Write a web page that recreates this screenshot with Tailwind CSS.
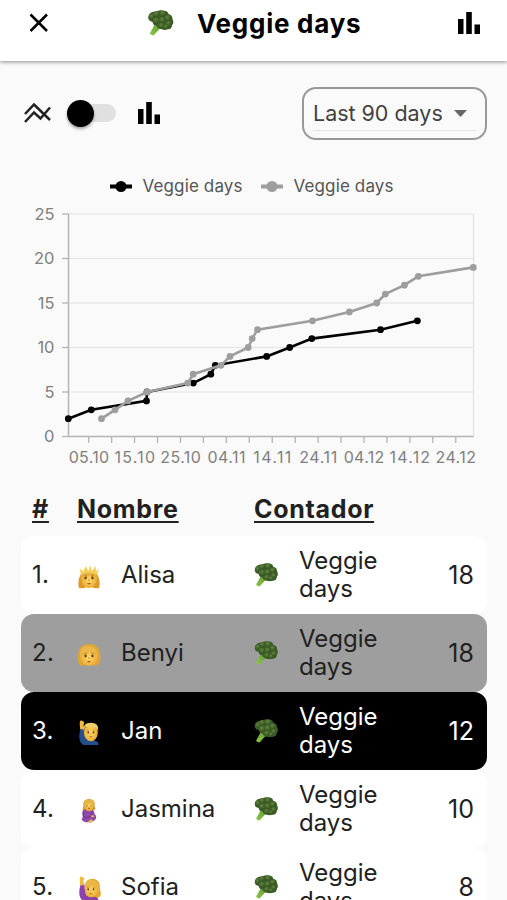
<!DOCTYPE html>
<html lang="es">
<head>
<meta charset="utf-8">
<meta name="viewport" content="width=device-width, initial-scale=1">
<title>Veggie days</title>
<script src="https://cdn.jsdelivr.net/npm/@tailwindcss/browser@4"></script>
</head>
<body class="h-[900px] overflow-hidden bg-[#fafafa] font-[Inter,sans-serif] text-[#212121]">
<svg class="absolute size-0">
  <defs>
    <linearGradient id="stem" x1="0" y1="1" x2="1" y2="0"><stop offset="0" stop-color="#8fc54b"/><stop offset="1" stop-color="#4f8d27"/></linearGradient>
    <radialGradient id="face"><stop offset="0" stop-color="#ffdc6b"/><stop offset="1" stop-color="#eaad35"/></radialGradient>
    <radialGradient id="bud" cx=".4" cy=".3"><stop offset="0" stop-color="#64843f"/><stop offset="1" stop-color="#385923"/></radialGradient>
    <symbol id="bars" viewBox="0 0 22 22"><path d="M0 7h5.500v15H0zM8.200 0h5.600v22H8.200zM16.500 12.500H22V22h-5.500z"/></symbol>
    <symbol id="broccoli" viewBox="0 0 26 26">
      <path d="M8 13L2.500 23q-.3 1.500 1 1.600l1.500.6q1 .5 1.800-.5L12 19l6-3-4-6z" fill="url(#stem)"/>
      <path d="M1 6Q3 1 8 2q4-3 9-1 3-.5 4 3 4 1 4 5 2 4-.5 6 0 5-5 4-3 2-6-.5-4 0-4.500-3Q6 16 5 12 0 11 1 6z" fill="#3d5e29"/>
      <g fill="url(#bud)"><circle cx="4.500" cy="7" r="3.300"/><circle cx="9" cy="4.500" r="3.400"/><circle cx="15.500" cy="4" r="3.600"/><circle cx="20.500" cy="8.500" r="3.600"/><circle cx="9" cy="11" r="3.600"/><circle cx="15" cy="10.500" r="3.600"/><circle cx="14" cy="16" r="3.200"/><circle cx="21.500" cy="14" r="3.200"/><circle cx="18.500" cy="17" r="2.600"/></g>
    </symbol>
    <symbol id="features" viewBox="0 0 24 24">
      <g fill="#5b3c14"><ellipse cx="8.600" cy="13" rx="1.100" ry="1.400"/><ellipse cx="15.400" cy="13" rx="1.100" ry="1.400"/></g>
      <path d="M7 10.500q1.500-.8 2.800 0M14.200 10.500q1.500-.8 2.800 0M12 14v2" fill="none" stroke="#b77a20" stroke-width=".8"/>
      <path d="M9.800 18.300q2.200-.6 4.400 0-2.200 2.300-4.400 0z" fill="#b45324"/>
    </symbol>
    <symbol id="princess" viewBox="0 0 24 24">
      <path d="M2 23Q0 16 4 9q8-5 16 0 4 7 2 14-5 1-7-1H9q-2 2-7 1z" fill="#dc9b28"/>
      <ellipse cx="12" cy="15" rx="7.500" ry="8" fill="url(#face)"/>
      <path d="M4 15Q3 7 12 7t8 8q-5-1-7-5-4 4-9 5z" fill="#e8b23e"/>
      <path d="M4 10L2.500 3.500l4 3L8.500 1l3 5L13 0 15 6l3.500-5 .5 5.500 3-3L20 10Q12 5.500 4 10z" fill="#f4cf57"/>
      <use href="#features" width="24" height="24"/>
    </symbol>
    <symbol id="woman" viewBox="0 0 24 24">
      <path d="M2 21Q0 18 1 10 3 1 12 1q10-1 11 10 1 7-1 10-3 3-6 1H7q-3 2-5-1z" fill="#dfa535"/>
      <ellipse cx="12" cy="14.500" rx="8.500" ry="8.500" fill="url(#face)"/>
      <path d="M3 14Q2 3 11 3t10 11q-6-2-8-6-3 5-10 6z" fill="#ebb847"/>
      <use href="#features" width="24" height="24"/>
    </symbol>
    <g id="raised">
      <path d="M3 9Q-1 23 6 27h16q1-4-5-5L9 21 7 9z" fill="currentColor"/>
      <path d="M2.500 10L2 4q0-4 2-3.500L6.500 2q1 1-.5 3l1 5z" fill="#efbb48"/>
    </g>
    <symbol id="man-raised" viewBox="0 0 24 28">
      <use href="#raised"/><ellipse cx="14" cy="13.500" rx="7.500" ry="9.500" fill="url(#face)"/>
      <path d="M6 12Q5 3 14 3t8 9q-1-3-3-4-6 1-11-1z" fill="#efcd69"/>
      <use href="#features" x="4" y="1" width="20" height="23"/>
    </symbol>
    <symbol id="woman-raised" viewBox="0 0 24 28">
      <path d="M7 12Q8 3 16 3t8 12q2 6-1 8-7 3-14-2z" fill="#e1a735"/>
      <use href="#raised"/><ellipse cx="14.500" cy="15" rx="7" ry="8" fill="url(#face)"/>
      <path d="M7 14Q7 4 15 4t8 13q-5-3-7-8-3 4-9 5z" fill="#eab744"/>
      <use href="#features" x="4" y="2" width="20" height="23"/>
    </symbol>
    <symbol id="pregnant" viewBox="0 0 18 28">
      <path d="M3 8Q2 1 9 1q7 0 6 7l1 4-5 3H5l-3-2z" fill="#d99d37"/>
      <ellipse cx="9" cy="8" rx="4.800" ry="5.500" fill="url(#face)"/>
      <path d="M3 9Q3 1 9 2q6-1 6 6-4-1-5-4-2 4-7 5z" fill="#e6b546"/>
      <path d="M7 8v1M11 8v1M8 11h2" stroke="#784a17"/>
      <path d="M4 12q5 4 9 1 2 1 2 4 3 3 1 6-2 3-7 3-6 1-8-3 2-2 1-5Q1 14 4 12z" fill="#8e4aa8"/>
      <path d="M3 15q-1 5 3 6l5-1M12 15q-1 4 1 5" stroke="#6e308d" fill="none"/>
      <path d="M8 25q4-3 5-1 0 3-3 3zM11 19q3-1 4 1l-3 1z" fill="#edb64b"/>
    </symbol>
  </defs>
</svg>

<header class="relative flex h-[60.500px] items-start bg-white text-black shadow-[0_1px_4px_rgba(0,0,0,.45)]">
  <svg class="ml-[29px] mt-[13px] size-5" viewBox="0 0 20 20" fill="none" stroke="currentColor" stroke-width="2.500"><path d="M1.500 1.500l16.500 16.500M18 1.500L1.500 18"/></svg>
  <svg class="ml-[98px] mt-[10px] h-[26px] w-[27px]"><use href="#broccoli"/></svg>
  <h1 class="ml-[23px] mt-[7px] w-[200px] text-[26px] leading-[34px] font-bold tracking-[0.75px] whitespace-nowrap">Veggie days</h1>
  <svg class="ml-auto mr-[27px] mt-[12px] size-[22px]"><use href="#bars"/></svg>
</header>

<main>
  <section class="flex h-[105px] items-center pl-6 pr-5">
    <svg class="h-5 w-[27px]" viewBox="0 0 27 20" fill="none" stroke="currentColor" stroke-width="2.500"><path d="M1 11l9-9.500L26 17M1 19l9-9.500 6.500 6L26 4.500"/></svg>
    <div class="ml-4 flex h-[18px] w-[49px] items-center rounded-full bg-[#e0e0e0]"><span class="size-[27px] rounded-full bg-black shadow-[0_2px_3px_rgba(0,0,0,.35)]"></span></div>
    <svg class="ml-[22px] size-[22px]"><use href="#bars"/></svg>
    <div class="ml-auto h-[53px] w-[185px] rounded-[14px] border-[2.500px] border-[#999] pl-[9px] pr-[9px]">
      <div class="flex h-[42px] items-center justify-between border-b border-[#e4e4e4] pr-[9px] pt-[8px] text-[#424242]">
        <span class="text-[21.500px] leading-7 tracking-[-0.020px] whitespace-nowrap">Last 90 days</span>
        <svg class="h-[7px] w-[13px] shrink-0" viewBox="0 0 13 7" fill="#666"><path d="M0 0h13L6.500 7z"/></svg>
      </div>
    </div>
  </section>

  <svg id="chart" class="block h-[314px] w-[507px]" viewBox="0 166 507 314" font-size="16"></svg>

  <section class="pl-[21px] pr-5">
    <div class="flex h-[56px] pl-[11px] pt-[11px] text-[25px] leading-[36px] font-bold tracking-[0.700px] underline decoration-2 underline-offset-[3px]">
      <span class="w-[45px]">#</span><span class="w-[177px]">Nombre</span><span>Contador</span>
    </div>
    <div id="rows" class="text-[24px] leading-7"></div>
  </section>
</main>

<template id="row">
  <div class="flex h-[78px] items-center rounded-[13px] pl-[11px] pr-[13px] pt-px">
    <span class="rank w-[45px] shrink-0 tracking-[0.3px]"></span>
    <svg class="mt-1 h-[26px] w-[24px] shrink-0"><use class="avatar"/></svg>
    <span class="name ml-5 w-[133px] shrink-0"></span>
    <svg class="size-[24px] shrink-0"><use href="#broccoli"/></svg>
    <span class="ml-[21px] w-[90px]">Veggie days</span>
    <span class="count ml-auto text-[25px]"></span>
  </div>
</template>

<script>
const people = [
  ['Alisa', 18, 'princess', 'bg-white'],
  ['Benyi', 18, 'woman', 'bg-[#9e9e9e]'],
  ['Jan', 12, 'man-raised', 'bg-black text-white'],
  ['Jasmina', 10, 'pregnant', 'bg-white'],
  ['Sofia', 8, 'woman-raised', 'bg-white']
];
const colors = {'man-raised': '#234f8c', 'woman-raised': '#8b43a8'};
people.forEach(([name, count, avatar, cls], i) => {
  const row = document.getElementById('row').content.firstElementChild.cloneNode(true);
  row.className += ' ' + cls;
  row.querySelector('.rank').textContent = (i + 1) + '.';
  row.querySelector('.name').textContent = name;
  row.querySelector('.count').textContent = count;
  const use = row.querySelector('.avatar');
  use.setAttribute('href', '#' + avatar);
  if (colors[avatar]) use.style.color = colors[avatar];
  document.getElementById('rows').append(row);
});

const y = v => 436.5 - v * 8.9;
let s = '';
[['#000', 110, 142.5], ['#9e9e9e', 261, 293.5]].forEach(([c, x, tx]) => {
  s += `<path d="M${x} 186.500h22" stroke="${c}" stroke-width="4"/><circle cx="${x + 11}" cy="186.500" r="5.500" fill="${c}"/>`;
  s += `<text x="${tx}" y="192" font-size="17" fill="#555" textLength="100">Veggie days</text>`;
});
for (let v = 0; v <= 25; v += 5) {
  s += `<path d="M68.500 ${y(v)}H473.500" stroke="#e2e2e2" stroke-width="1.200"/><path d="M62 ${y(v)}h6.500" stroke="#b5b5b5" stroke-width="1.300"/>`;
  s += `<text x="54.500" y="${y(v) + 5.5}" text-anchor="end" fill="#808080" font-size="16.500">${v}</text>`;
}
s += '<path d="M473.500 214V436.500" stroke="#e2e2e2" stroke-width="1.200"/><path d="M68.500 213.500V436.500H473.500" fill="none" stroke="#b5b5b5" stroke-width="1.500"/>';
for (let k = 0; k < 17; k++) s += `<path d="M${88.7 + 22.94 * k} 436.500v6.500" stroke="#b5b5b5" stroke-width="1.300"/>`;
['05.10', '15.10', '25.10', '04.11', '14.11', '24.11', '04.12', '14.12', '24.12'].forEach((t, i) => {
  s += `<text x="${88.9 + 45.85 * i}" y="462.500" text-anchor="middle" fill="#808080" font-size="16" textLength="${t.endsWith('11') ? 38 : 40.5}">${t}</text>`;
});
const series = [
  ['#000', [[68.3,2],[91.3,3],[146.5,4],[147,5],[193.3,6],[210.8,7],[215.3,8],[266.7,9],[289.7,10],[311.8,11],[380.5,12],[417.4,13]]],
  ['#9e9e9e', [[101.5,2],[115,3],[128,4],[147.2,5],[187.7,6],[193.2,7],[221,8],[230,9],[248.2,10],[252.2,11],[257.5,12],[312.5,13],[349.3,14],[376.7,15],[385.3,16],[404.4,17],[418.3,18],[473.3,19]]]
];
series.forEach(([c, pts]) => {
  s += `<polyline fill="none" stroke="${c}" stroke-width="2.600" points="${pts.map(([x, v]) => x + ',' + y(v)).join(' ')}"/>`;
  pts.forEach(([x, v]) => { s += `<circle cx="${x}" cy="${y(v)}" r="3.400" fill="${c}"/>`; });
});
document.getElementById('chart').innerHTML = s;
</script>
</body>
</html>
